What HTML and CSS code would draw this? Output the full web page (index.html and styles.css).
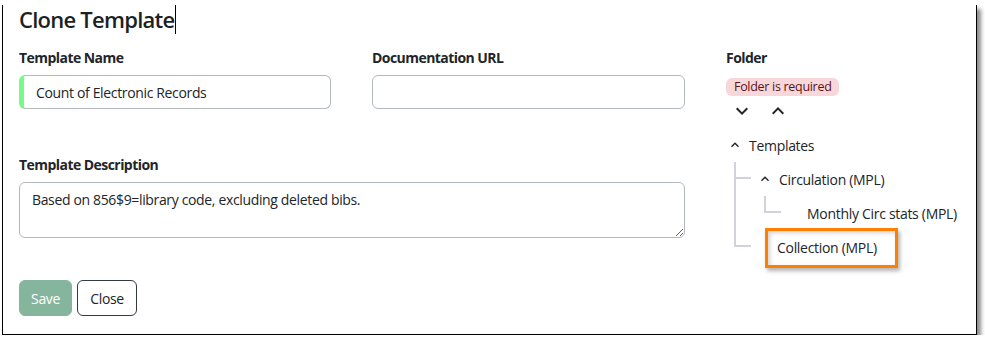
FILE: index.html
```html
<!DOCTYPE html>
<html lang="en">
<head>
<meta charset="utf-8">
<title>Clone Template</title>
<link rel="stylesheet" href="styles.css">
</head>
<body>
<div class="frame">
  <h1 class="title">Clone Template<span class="caret"></span></h1>
  <div class="layout">
    <div class="main">
      <div class="fields">
        <div class="field">
          <label class="label" for="tname">Template Name</label>
          <input id="tname" class="input valid" type="text" value="Count of Electronic Records">
        </div>
        <div class="field">
          <label class="label" for="turl">Documentation URL</label>
          <input id="turl" class="input" type="text" value="">
        </div>
        <div class="field wide">
          <label class="label" for="tdesc">Template Description</label>
          <textarea id="tdesc" class="input textarea">Based on 856$9=library code, excluding deleted bibs.</textarea>
        </div>
      </div>
      <div class="actions">
        <button class="btn btn-save" type="button">Save</button>
        <button class="btn btn-close" type="button">Close</button>
      </div>
    </div>
    <div class="folder">
      <div class="label">Folder</div>
      <span class="badge">Folder is required</span>
      <div class="tools">
        <svg class="tool-icon" viewBox="0 0 24 24"><path d="M7.41 8.59 12 13.17l4.59-4.58L18 10l-6 6-6-6 1.41-1.41z"/></svg>
        <svg class="tool-icon" viewBox="0 0 24 24"><path d="M7.41 15.41 12 10.83l4.59 4.58L18 14l-6-6-6 6z"/></svg>
      </div>
      <div class="tree">
        <div class="node">
          <div class="row root-row">
            <svg class="toggle" viewBox="0 0 24 24"><path d="M7.41 15.41 12 10.83l4.59 4.58L18 14l-6-6-6 6z"/></svg>
            <span class="node-label">Templates</span>
          </div>
          <div class="children">
            <div class="child">
              <div class="conn"><div class="elbow"></div><div class="rest"></div></div>
              <div class="node">
                <div class="row">
                  <svg class="toggle" viewBox="0 0 24 24"><path d="M7.41 15.41 12 10.83l4.59 4.58L18 14l-6-6-6 6z"/></svg>
                  <span class="node-label">Circulation (MPL)</span>
                </div>
                <div class="children sub">
                  <div class="child last">
                    <div class="conn"><div class="elbow"></div><div class="rest"></div></div>
                    <div class="node">
                      <div class="row">
                        <span class="spacer"></span>
                        <span class="node-label">Monthly Circ stats (MPL)</span>
                      </div>
                    </div>
                  </div>
                </div>
              </div>
            </div>
            <div class="child last">
              <div class="conn"><div class="elbow"></div><div class="rest"></div></div>
              <div class="node">
                <div class="row highlighted">
                  <span class="spacer"></span>
                  <span class="node-label">Collection (MPL)</span>
                  <span class="highlight"></span>
                </div>
              </div>
            </div>
          </div>
        </div>
      </div>
    </div>
  </div>
</div>
</body>
</html>
```

FILE: styles.css
```css
html, body {
  margin: 0;
  background: #ffffff;
}

body {
  font-family: "Open Sans", "Noto Sans", sans-serif;
  color: #212529;
  font-size: 14px;
}

.frame {
  margin-left: 2px;
  width: 975px;
  height: 330px;
  box-sizing: border-box;
  border: 1px solid #000;
  border-top: none;
  box-shadow: 4px 4px 4px rgba(0, 0, 0, 0.45);
  padding: 0 15px 0 16px;
}

.title {
  margin: 5px 0 0;
  font-size: 22px;
  font-weight: 600;
  line-height: 29px;
  height: 29px;
  letter-spacing: -0.75px;
  color: #1c1f23;
}

.caret {
  display: inline-block;
  width: 1px;
  height: 29px;
  background: #000;
  vertical-align: top;
  margin-left: 1px;
}

.layout {
  display: flex;
  column-gap: 41px;
  margin-top: 13px;
}

.main {
  width: 666px;
  flex: none;
}

.fields {
  display: grid;
  grid-template-columns: 312px 313px;
  column-gap: 41px;
  row-gap: 45px;
}

.wide {
  grid-column: 1 / -1;
}

.label {
  display: block;
  font-weight: 700;
  font-size: 14px;
  line-height: 21px;
  margin-bottom: 7px;
  letter-spacing: -0.55px;
}

.input {
  display: block;
  box-sizing: border-box;
  width: 100%;
  height: 34px;
  margin: 0;
  border: 1px solid #b3b8bd;
  border-radius: 6px;
  padding: 0 12px;
  font-family: "Open Sans", "Noto Sans", sans-serif;
  font-size: 14px;
  color: #212529;
  background: #fff;
  letter-spacing: -0.35px;
  outline: none;
}

.input.valid {
  border-left: 5px solid #78fa89;
}

.textarea {
  height: 56px;
  padding: 6px 12px;
  line-height: 21px;
}

.actions {
  display: flex;
  gap: 5px;
  margin-top: 42px;
}

.btn {
  height: 36px;
  border-radius: 6px;
  font-family: "Open Sans", "Noto Sans", sans-serif;
  font-size: 14px;
  letter-spacing: -0.3px;
}

.btn-save {
  padding: 0 11px;
  background: #86b59e;
  border: 1px solid #86b59e;
  color: #fff;
}

.btn-close {
  padding: 0 12px;
  background: #fff;
  border: 1px solid #343a40;
  color: #212529;
}

.folder {
  flex: 1;
}

.badge {
  display: inline-block;
  margin-top: 3px;
  height: 18px;
  line-height: 18px;
  padding: 0 8px;
  background: #f8d7da;
  color: #58151c;
  border-radius: 6px;
  font-size: 12.5px;
  letter-spacing: -0.3px;
}

.tools {
  display: flex;
  gap: 12px;
  margin: 3px 0 0 4px;
  height: 24px;
}

.tool-icon {
  width: 24px;
  height: 24px;
  fill: #212529;
}

.tree {
  margin-top: 5px;
}

.row {
  display: flex;
  align-items: center;
  height: 34px;
  letter-spacing: -0.3px;
}

.root-row {
  padding-left: 1px;
}

.toggle {
  width: 16px;
  height: 16px;
  fill: #212529;
  margin-right: 6px;
  flex: none;
}

.child .row .toggle {
  margin-left: 6px;
}

.spacer {
  width: 14px;
  margin-left: 6px;
  margin-right: 6px;
  flex: none;
}

.children {
  margin-left: 8px;
}

.children.sub {
  margin-left: 13px;
}

.child {
  display: flex;
}

.conn {
  width: 17px;
  display: flex;
  flex-direction: column;
  flex: none;
}

.elbow {
  box-sizing: border-box;
  height: 17px;
  border-left: 2px solid #d0d4da;
  border-bottom: 2px solid #d0d4da;
}

.rest {
  flex: 1;
  border-left: 2px solid #d0d4da;
}

.child.last > .conn > .rest {
  border-left-color: transparent;
}

.highlighted {
  position: relative;
}

.highlight {
  position: absolute;
  left: 14px;
  top: -2px;
  width: 133px;
  height: 40px;
  box-sizing: border-box;
  border: 3px solid #ff8000;
  box-shadow: 2px 3px 4px rgba(0, 0, 0, 0.3), inset 2px 2px 4px rgba(0, 0, 0, 0.18);
}
```
